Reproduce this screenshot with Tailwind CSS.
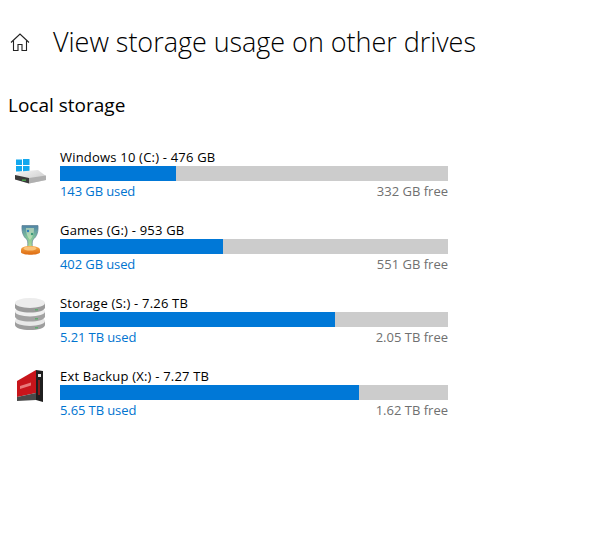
<!DOCTYPE html>
<html lang="en">
<head>
<meta charset="UTF-8">
<title>View storage usage on other drives</title>
<script src="https://cdn.jsdelivr.net/npm/@tailwindcss/browser@4"></script>
</head>
<body class="bg-white font-['Open_Sans',sans-serif] text-black overflow-hidden">
<div class="w-[606px] h-[545px] pl-2 pt-[22px]">
  <!-- header -->
  <div class="flex items-center h-10">
    <svg class="w-[22px] h-[22px] ml-[1px]" viewBox="0 0 22 22" fill="none" stroke="#222" stroke-width="1.1">
      <path d="M2 11.500 11 3l9 8.500"/>
      <path d="M4.500 9.500V19.500h4.500v-6h4v6h4.500V9.500"/>
    </svg>
    <h1 class="ml-[22px] text-[27px] leading-10 font-light tracking-[-0.04px] whitespace-nowrap">View storage usage on other drives</h1>
  </div>
  <h2 class="mt-[31px] text-[19px] leading-[24px] font-normal">Local storage</h2>

  <div class="mt-[31px] flex flex-col gap-5">
    <!-- C: -->
    <div class="flex">
      <div class="w-[52px] shrink-0 pt-[2px]">
        <svg class="w-9 h-9 ml-[5px]" viewBox="0 0 36 36">
          <defs>
            <linearGradient id="driveTop" x1="0" y1="0" x2="1" y2="1"><stop offset="0" stop-color="#f7f7f7"/><stop offset="1" stop-color="#c4c4c4"/></linearGradient>
          </defs>
          <rect x="3" y="9.500" width="6" height="5.500" fill="#12a8ee"/><rect x="10" y="9" width="6.500" height="6" fill="#12a8ee"/>
          <rect x="3" y="16" width="6" height="5.500" fill="#12a8ee"/><rect x="10" y="16" width="6.500" height="6" fill="#12a8ee"/>
          <path d="M7 21.500l18-1.500 8 6v4l-17 3.500L2 29v-3.500z" fill="url(#driveTop)"/>
          <path d="M2 25l14 3v5.500L2 29.500z" fill="#3a3a3a"/>
          <path d="M16 28l17-2.500v4.500l-17 3.500z" fill="#b0b0b0"/>
          <rect x="9" y="29.500" width="4" height="1.300" fill="#48b04a"/>
        </svg>
      </div>
      <div class="w-[388px]">
        <div class="text-[13px] leading-[18px] tracking-[0.2px]">Windows 10 (C:) - 476 GB</div>
        <div class="h-[15px] bg-[#cccccc]"><div class="h-full bg-[#0078d7]" style="width:30%"></div></div>
        <div class="flex justify-between text-[13px] leading-[20px]">
          <span class="text-[#0074d0] tracking-[-0.1px]">143 GB used</span><span class="text-[#707070]">332 GB free</span>
        </div>
      </div>
    </div>
    <!-- G: -->
    <div class="flex">
      <div class="w-[52px] shrink-0 pt-[2px]">
        <svg class="w-9 h-9 ml-[5px]" viewBox="0 0 36 36">
          <defs>
            <linearGradient id="cup" x1="0" y1="0" x2="0" y2="1"><stop offset="0" stop-color="#4f83a6"/><stop offset=".55" stop-color="#7fc39a"/><stop offset="1" stop-color="#b9dc8f"/></linearGradient>
            <linearGradient id="base" x1="0" y1="0" x2="0" y2="1"><stop offset="0" stop-color="#f6a94a"/><stop offset="1" stop-color="#dd6a10"/></linearGradient>
          </defs>
          <path d="M9 2.500h16c.5 6-1 11-5 14-1 2-1 5-.5 8h-5c.5-3 .5-6-.5-8-4-3-5.500-8-5-14z" fill="url(#cup)" stroke="#5b7f93" stroke-width=".7"/>
          <path d="M13 5h8c0 5-1 9-4 12-3-3-4-7-4-12z" fill="#d5ecc0" opacity=".6"/>
          <circle cx="15" cy="8" r="1.200" fill="#2f7fc0"/><circle cx="19" cy="11" r="1.200" fill="#3f9a78"/>
          <path d="M8 27c0-3 4-4 9-4s10 1 10 4v2.500c-2 3-17 3-19 0z" fill="url(#base)"/>
          <ellipse cx="17" cy="25.500" rx="6.500" ry="2" fill="#f9c47c"/>
        </svg>
      </div>
      <div class="w-[388px]">
        <div class="text-[13px] leading-[18px] tracking-[0.2px]">Games (G:) - 953 GB</div>
        <div class="h-[15px] bg-[#cccccc]"><div class="h-full bg-[#0078d7]" style="width:42%"></div></div>
        <div class="flex justify-between text-[13px] leading-[20px]">
          <span class="text-[#0074d0] tracking-[-0.1px]">402 GB used</span><span class="text-[#707070]">551 GB free</span>
        </div>
      </div>
    </div>
    <!-- S: -->
    <div class="flex">
      <div class="w-[52px] shrink-0 pt-[2px]">
        <svg class="w-9 h-9 ml-[5px]" viewBox="0 0 36 36">
          <path d="M2 25v4c0 3 7 5 15 5s15-2 15-5v-4z" fill="#9d9d9d"/>
          <ellipse cx="17" cy="25" rx="15" ry="5" fill="#e8e8e8"/>
          <path d="M2 15.500v5c0 3 7 5 15 5s15-2 15-5v-5z" fill="#a2a2a2"/>
          <ellipse cx="17" cy="15.500" rx="15" ry="5" fill="#efefef"/>
          <path d="M2 7v4.500c0 3 7 5 15 5s15-2 15-5V7z" fill="#9a9a9a"/>
          <ellipse cx="17" cy="7" rx="15" ry="5" fill="#ececec"/>
          <rect x="22" y="13" width="3" height="1.500" fill="#5faa6e"/><rect x="22" y="22" width="3" height="1.500" fill="#5faa6e"/><rect x="22" y="31" width="3" height="1.500" fill="#5faa6e"/>
        </svg>
      </div>
      <div class="w-[388px]">
        <div class="text-[13px] leading-[18px] tracking-[0.2px]">Storage (S:) - 7.26 TB</div>
        <div class="h-[15px] bg-[#cccccc]"><div class="h-full bg-[#0078d7]" style="width:70.900%"></div></div>
        <div class="flex justify-between text-[13px] leading-[20px]">
          <span class="text-[#0074d0] tracking-[-0.1px]">5.21 TB used</span><span class="text-[#707070]">2.05 TB free</span>
        </div>
      </div>
    </div>
    <!-- X: -->
    <div class="flex">
      <div class="w-[52px] shrink-0 pt-[2px]">
        <svg class="w-9 h-9 ml-[5px]" viewBox="0 0 36 36">
          <path d="M4 12L23 1v23L4 28z" fill="#c8151b"/>
          <path d="M4 28l19-4v7L4 32z" fill="#4a4a4a"/>
          <path d="M7 17l11-3.500v3L7 20z" fill="#e87a7a"/>
          <path d="M23 1l7 1v31l-7-2z" fill="#1f1f1f"/>
          <rect x="25" y="5" width="3" height="3" fill="#e5e5e5"/>
          <rect x="25" y="11" width="2" height="15" fill="#8a1a1a"/>
        </svg>
      </div>
      <div class="w-[388px]">
        <div class="text-[13px] leading-[18px] tracking-[0.2px]">Ext Backup (X:) - 7.27 TB</div>
        <div class="h-[15px] bg-[#cccccc]"><div class="h-full bg-[#0078d7]" style="width:77%"></div></div>
        <div class="flex justify-between text-[13px] leading-[20px]">
          <span class="text-[#0074d0] tracking-[-0.1px]">5.65 TB used</span><span class="text-[#707070]">1.62 TB free</span>
        </div>
      </div>
    </div>
  </div>
</div>
</body>
</html>
